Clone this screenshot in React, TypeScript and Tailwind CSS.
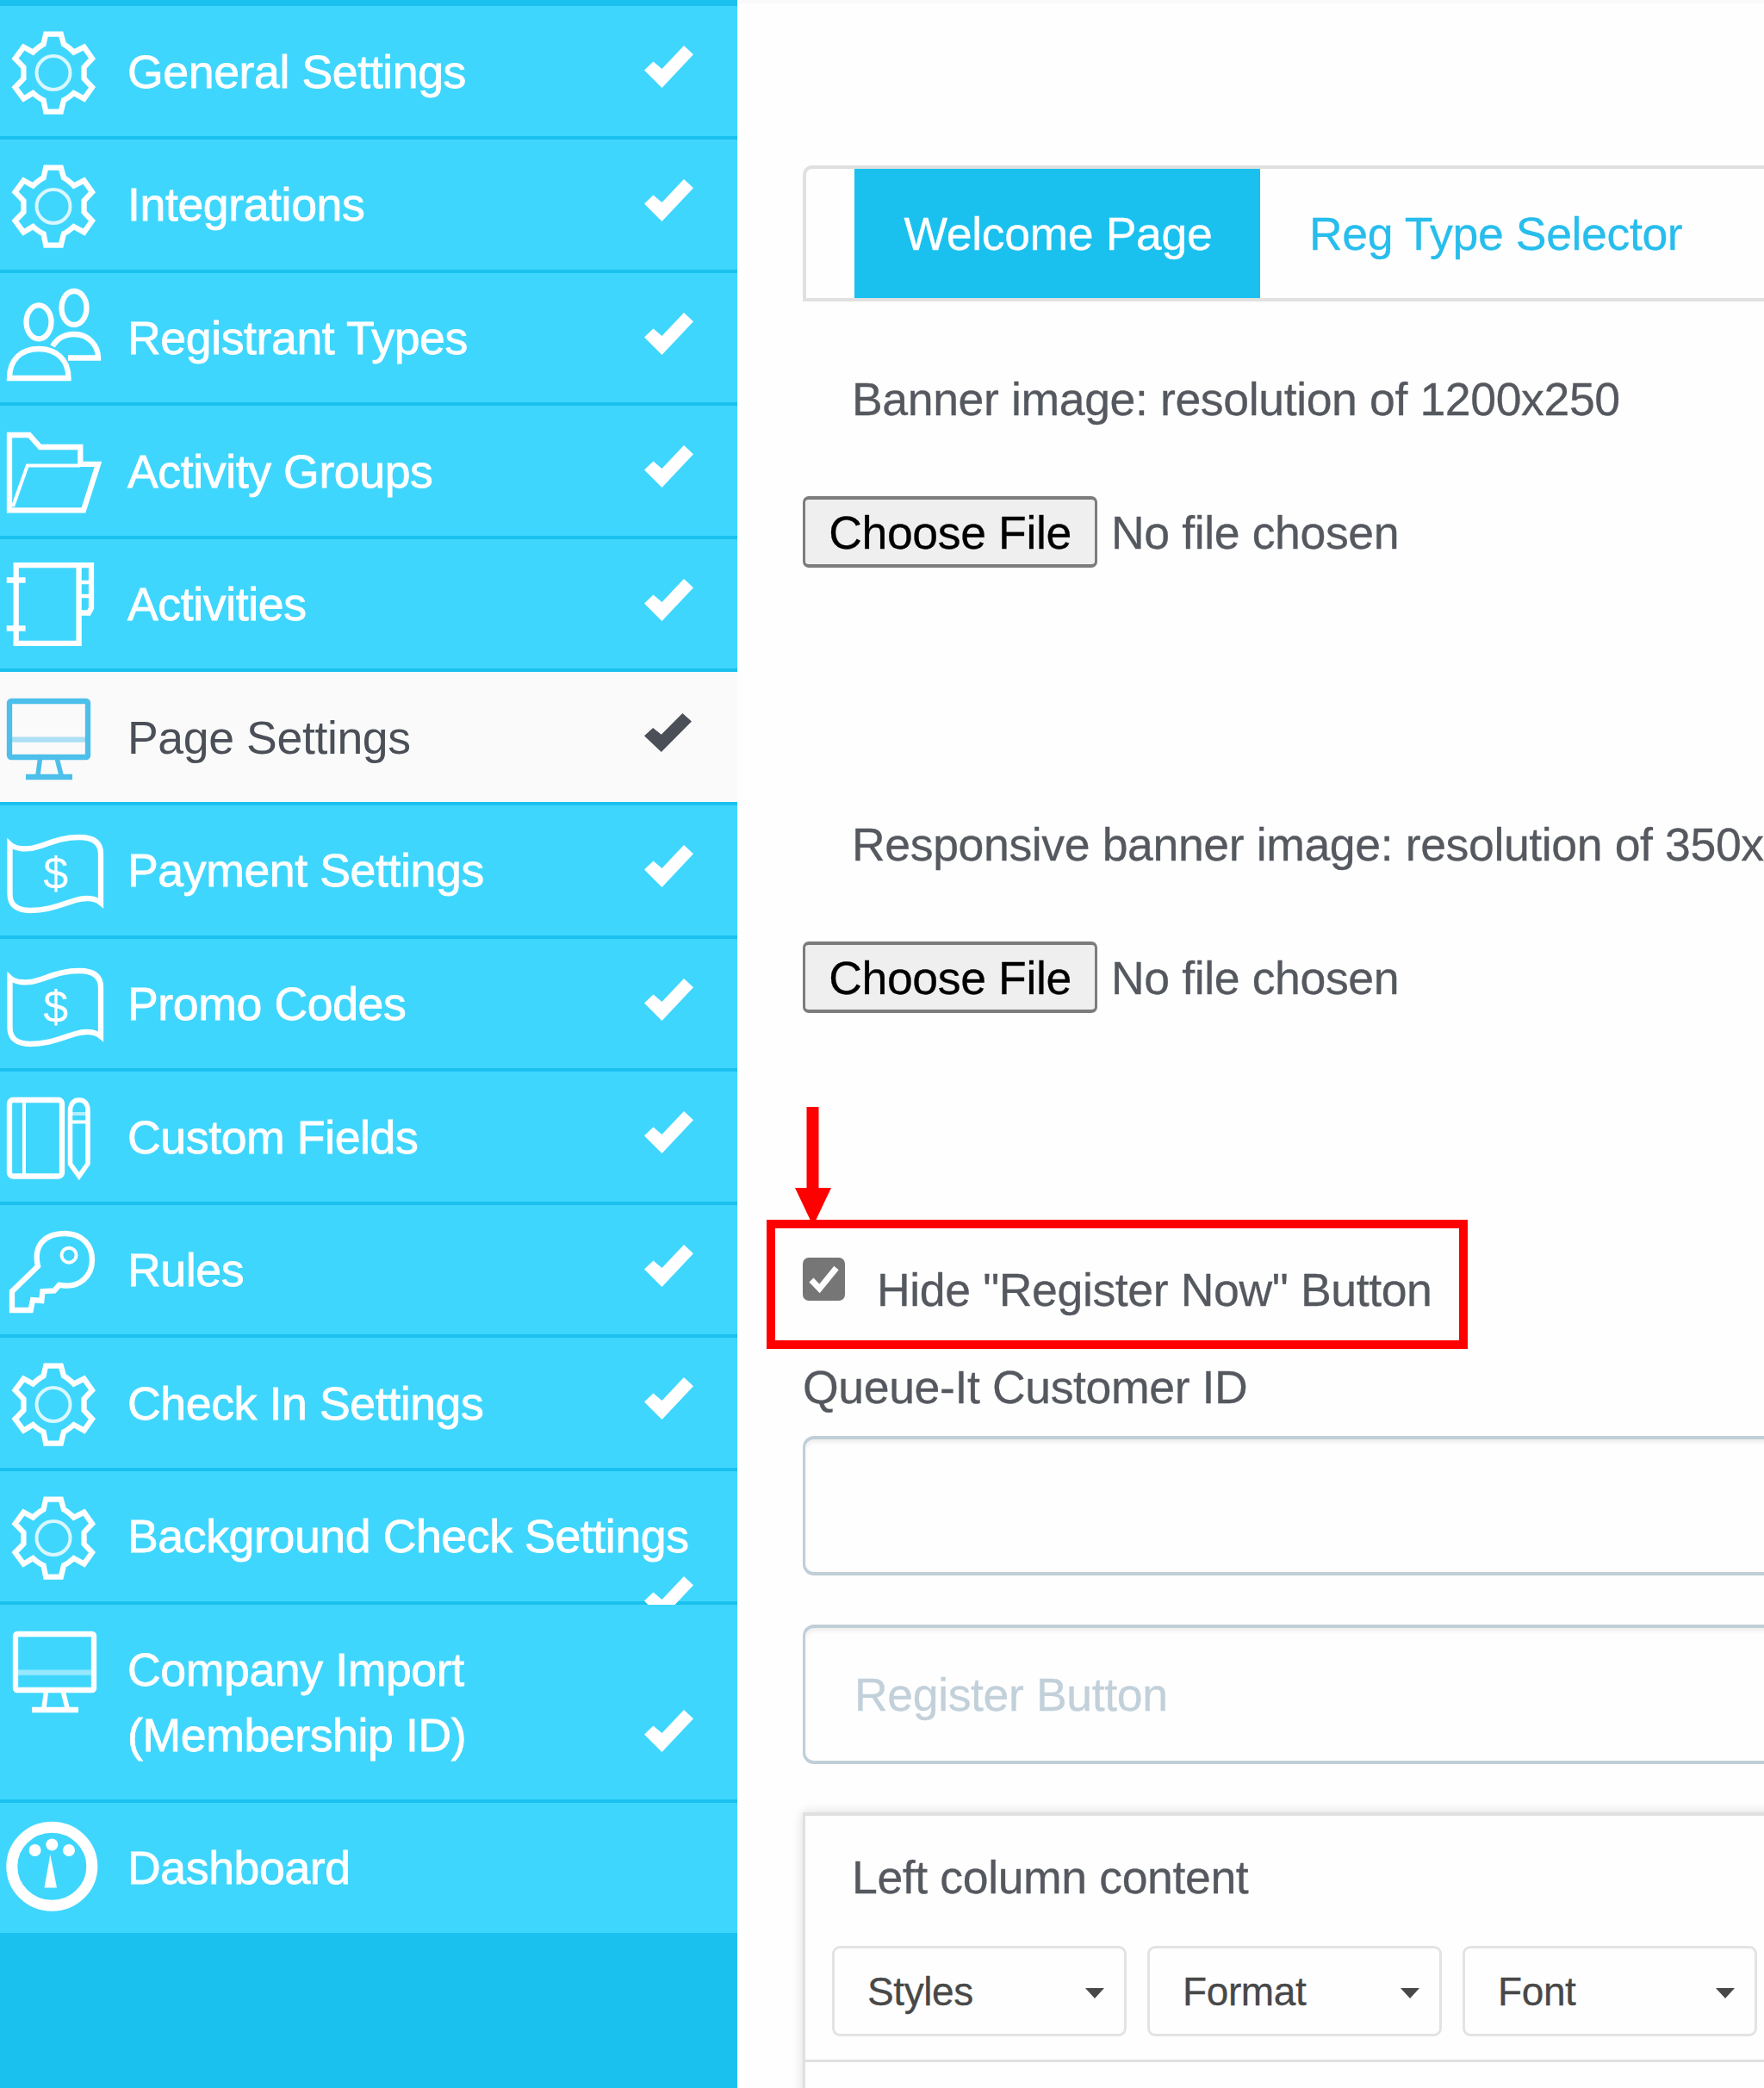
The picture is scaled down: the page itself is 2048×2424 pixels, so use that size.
import React from 'react';

type IconName = 'gear' | 'people' | 'folder' | 'notebook' | 'monitor' | 'money' | 'book' | 'key' | 'gauge';

interface MenuItem {
  icon: IconName;
  label: string;
  active?: boolean;
  checked?: boolean;
  // the check mark drops below the first line when the label is long
  wrapped?: boolean;
  height?: string;
}

const menuItems: MenuItem[] = [
  { icon: 'gear', label: 'General Settings', checked: true },
  { icon: 'gear', label: 'Integrations', checked: true },
  { icon: 'people', label: 'Registrant Types', checked: true },
  { icon: 'folder', label: 'Activity Groups', checked: true },
  { icon: 'notebook', label: 'Activities', checked: true },
  { icon: 'monitor', label: 'Page Settings', checked: true, active: true },
  { icon: 'money', label: 'Payment Settings', checked: true },
  { icon: 'money', label: 'Promo Codes', checked: true },
  { icon: 'book', label: 'Custom Fields', checked: true },
  { icon: 'key', label: 'Rules', checked: true },
  { icon: 'gear', label: 'Check In Settings', checked: true },
  { icon: 'gear', label: 'Background Check Settings', checked: true, wrapped: true },
  { icon: 'monitor', label: 'Company Import\n(Membership ID)', checked: true, wrapped: true, height: 'h-[230.4px]' },
  { icon: 'gauge', label: 'Dashboard', height: 'h-[151px]' },
];

const iconShapes: Record<IconName, React.ReactNode> = {
  gear: (
    <>
      <path d="M53.2 32.6H70.8L74 44.3Q79 47 85.6 53.6L97.6 47.6L107 61L97.6 71V84.3L107 94.3L97.6 107.6L85.6 101Q79 107 74 109.3L70.8 122.6H53.2L50.5 109.3Q45 107 38.4 101L27.4 107.6L17.6 94.3L27.4 84.3V71L17.6 61L27.4 47.6L38.4 53.6Q45 47 50.5 44.3Z" />
      <circle cx="62" cy="77.5" r="19.5" strokeWidth="4" opacity="0.8" />
    </>
  ),
  people: (
    <>
      <ellipse cx="45" cy="56.8" rx="14.5" ry="19.5" />
      <ellipse cx="86" cy="40.5" rx="14.5" ry="19.5" />
      <path d="M11 122C11 100 25 88 45 88C65 88 79.5 100 79.5 122Z" />
      <path d="M61 85C67 75 76 71 86 71C103 71 114 84 114 98.5H79" />
    </>
  ),
  folder: (
    <>
      <path d="M11 34H34L46.6 48H93.3V67.8H114L97 121.3H11Z" />
      <path d="M93 69.5H31.8L15 117" strokeWidth="4" />
    </>
  ),
  notebook: (
    <>
      <path d="M91.6 85.5H103L106 80V30.2H18.7V120.9H91.6V30.2" />
      <path d="M7.7 47.5H29.6M7.7 103.5H29.6" />
      <path d="M92 50H106M92 66H106" strokeWidth="4.5" />
    </>
  ),
  monitor: (
    <>
      <rect x="11" y="34" width="91" height="65" rx="2" />
      <path d="M11 78.6H102" opacity="0.45" />
      <path d="M46.6 100L44 119.6M66 100L71 119.6" strokeWidth="5.5" />
      <path d="M30 122H84" />
    </>
  ),
  money: (
    <>
      <path d="M11.5 45C18 51 32 52 44 48C60 43 72 37 92 37C107 37 117 42 117 56V113C110 107 98 107 88 110C68 116 56 122 35 122C20 122 11.5 116 11.5 103Z" />
      <text x="64.5" y="97" fontSize="52" textAnchor="middle" fill="currentColor" stroke="none">$</text>
    </>
  ),
  book: (
    <>
      <rect x="11" y="33" width="61" height="88.5" rx="4" />
      <path d="M28 33V122" strokeWidth="4" />
      <path d="M81.5 44Q83 33 91.8 33Q101 33 102 44V107L91.8 121.5L81.5 107Z" strokeWidth="5.5" />
      <path d="M81 49H102" strokeWidth="4" opacity="0.6" />
      <path d="M81 58.5H102" strokeWidth="4" />
    </>
  ),
  key: (
    <>
      <path d="M44 71C38 45 54 33 75 33C96 33 107 47 107 63.5C107 83 92 95 75 93.5L68.6 92.9L63 99.5L49.4 100.2L48.3 111L38 110.2L35.7 122H14V100.2Z" />
      <circle cx="80" cy="58.2" r="8.5" strokeWidth="4" />
    </>
  ),
  gauge: (
    <>
      <ellipse cx="60.3" cy="73.8" rx="46.5" ry="45.5" strokeWidth="13" />
      <g fill="currentColor" stroke="none">
        <circle cx="40.6" cy="55" r="7" />
        <circle cx="60.3" cy="48.5" r="7" />
        <circle cx="80" cy="55" r="7" />
        <path d="M58.3 60L66 98.5H51.5Z" />
      </g>
    </>
  ),
};

const MenuIcon = ({ name, className }: { name: IconName; className?: string }) => (
  <svg
    viewBox="0 0 148 150"
    className={`h-[150px] w-[148px] shrink-0 ${className || ''}`}
    fill="none"
    stroke="currentColor"
    strokeWidth="6.3"
  >
    {iconShapes[name]}
  </svg>
);

const CheckMark = ({ className }: { className?: string }) => (
  <svg viewBox="0 0 57 48" preserveAspectRatio="none" className={className} fill="currentColor">
    <path d="M0 28L10.5 18L20.5 26.5L46 0L57 10L20.5 48Z" />
  </svg>
);

const checkClass = (item: MenuItem) => {
  if (item.active) return 'mt-[48px] h-[45px] w-[55px]';
  return item.wrapped ? 'mt-[122px] h-[49px] w-[57px]' : 'mt-[46px] h-[49px] w-[57px]';
};

const Sidebar = () => (
  <aside className="w-[856px] shrink-0 bg-[#1ac1ef] pt-[7.4px] text-white">
    <ul>
      {menuItems.map((item) => (
        <li key={item.label} className={`overflow-hidden ${item.height || 'h-[154.6px]'}`}>
          <div
            className={`flex h-full items-start ${item.icon === 'gauge' ? '' : 'border-b-4 border-[#1ac1ef]'} ${
              item.active ? 'bg-[#fafafa] text-[#4b4f57]' : 'bg-[#3fd6fd]'
            }`}
          >
            <MenuIcon
              name={item.icon}
              className={item.active ? 'text-[#4cbfea]' : item.icon === 'monitor' ? 'translate-x-[7px]' : ''}
            />
            <span
              className={`w-[600px] shrink-0 pt-[37.4px] whitespace-pre ${
                item.active ? '' : '[-webkit-text-stroke:0.8px_currentColor]'
              }`}
            >
              {item.label}
            </span>
            {item.checked && <CheckMark className={`shrink-0 ${checkClass(item)}`} />}
          </div>
        </li>
      ))}
    </ul>
  </aside>
);

const FilePicker = () => (
  <div className="flex h-[83px] items-center">
    <button className="h-[83px] w-[342px] rounded-[7px] border-x-[3px] border-y-4 border-[#7c7c7c] bg-[#efefef] text-black">
      Choose File
    </button>
    <span className="ml-[16px]">No file chosen</span>
  </div>
);

const Dropdown = ({ label }: { label: string }) => (
  <div className="flex h-[105px] w-[342px] shrink-0 items-center justify-between rounded-[9px] border-[3px] border-[#e3e3e3] pr-[23px] pl-[38px] text-[46px] text-[#484848]">
    {label}
    <svg viewBox="0 0 22 12" className="mt-[5px] h-[12px] w-[22px]" fill="currentColor">
      <path d="M0 0H22L11 12Z" />
    </svg>
  </div>
);

export default function App() {
  return (
    <div className="flex h-[2424px] w-[2048px] overflow-hidden bg-[#fefefe] font-['Liberation_Sans',Arial,sans-serif] text-[53.6px] leading-[76px] tracking-[-0.39px] text-[#55595f]">
      <Sidebar />

      <main className="min-w-0 flex-1 overflow-hidden border-t-4 border-[#f9f9f9] pt-[188px] pl-[76px] [-webkit-text-stroke:0.3px_currentColor]">
        <nav className="flex h-[158px] w-[1300px] rounded-tl-[11px] border-4 border-[#e0e0e0] pl-[56px]">
          <a className="flex w-[471px] items-center justify-center bg-[#1ac1ef] pl-[2px] text-white">Welcome Page</a>
          <a className="flex items-center pl-[57px] text-[#27bdec]">Reg Type Selector</a>
        </nav>

        <p className="mt-[75px] pl-[57px] whitespace-nowrap">Banner image: resolution of 1200x250</p>
        <div className="mt-[75px]">
          <FilePicker />
        </div>

        <p className="mt-[283px] pl-[57px] whitespace-nowrap">Responsive banner image: resolution of 350x</p>
        <div className="mt-[75px]">
          <FilePicker />
        </div>

        <div className="relative mt-[240px] -ml-[42px] flex h-[150px] w-[814px] border-[10px] border-[#ff0000] pl-[32px]">
          <svg viewBox="0 0 42 134" className="absolute -top-[141px] left-[23px] h-[134px] w-[42px]" fill="#ff0000">
            <path d="M13.5 0H27.5V94H42L23 134H19L0 94H13.5Z" />
          </svg>
          <span className="mt-[34px] flex h-[50px] w-[49px] items-center justify-center rounded-[7px] bg-[#767676]">
            <svg viewBox="0 0 36 34" className="h-[34px] w-[36px]" fill="none" stroke="white" strokeWidth="7">
              <path d="M3 18L12.5 28L32 4" />
            </svg>
          </span>
          <span className="mt-[33px] ml-[37px] whitespace-nowrap">Hide "Register Now" Button</span>
        </div>

        <p className="mt-[6px]">Queue-It Customer ID</p>
        <div className="mt-[19px] h-[162px] w-[1300px] rounded-[13px] border-x-[3px] border-y-4 border-[#c0ced7] shadow-[inset_0_4px_4px_rgba(0,0,0,0.06)]" />
        <div className="mt-[57px] flex h-[162px] w-[1300px] items-center rounded-[13px] border-x-[3px] border-y-4 border-[#c0ced7] pl-[57px] text-[#c2d0da] shadow-[inset_0_4px_4px_rgba(0,0,0,0.06)]">
          Register Button
        </div>

        <section className="mt-[56px] h-[400px] w-[1300px] border-x-[3px] border-y-4 border-[#e0e0e0] shadow-[0_0_12px_rgba(0,0,0,0.14)]">
          <h3 className="pt-[33px] pl-[54px]">Left column content</h3>
          <div className="mt-[42px] flex h-[135px] gap-[24px] border-b-[3px] border-[#e0e0e0] pl-[31px]">
            <Dropdown label="Styles" />
            <Dropdown label="Format" />
            <Dropdown label="Font" />
          </div>
        </section>
      </main>
    </div>
  );
}
